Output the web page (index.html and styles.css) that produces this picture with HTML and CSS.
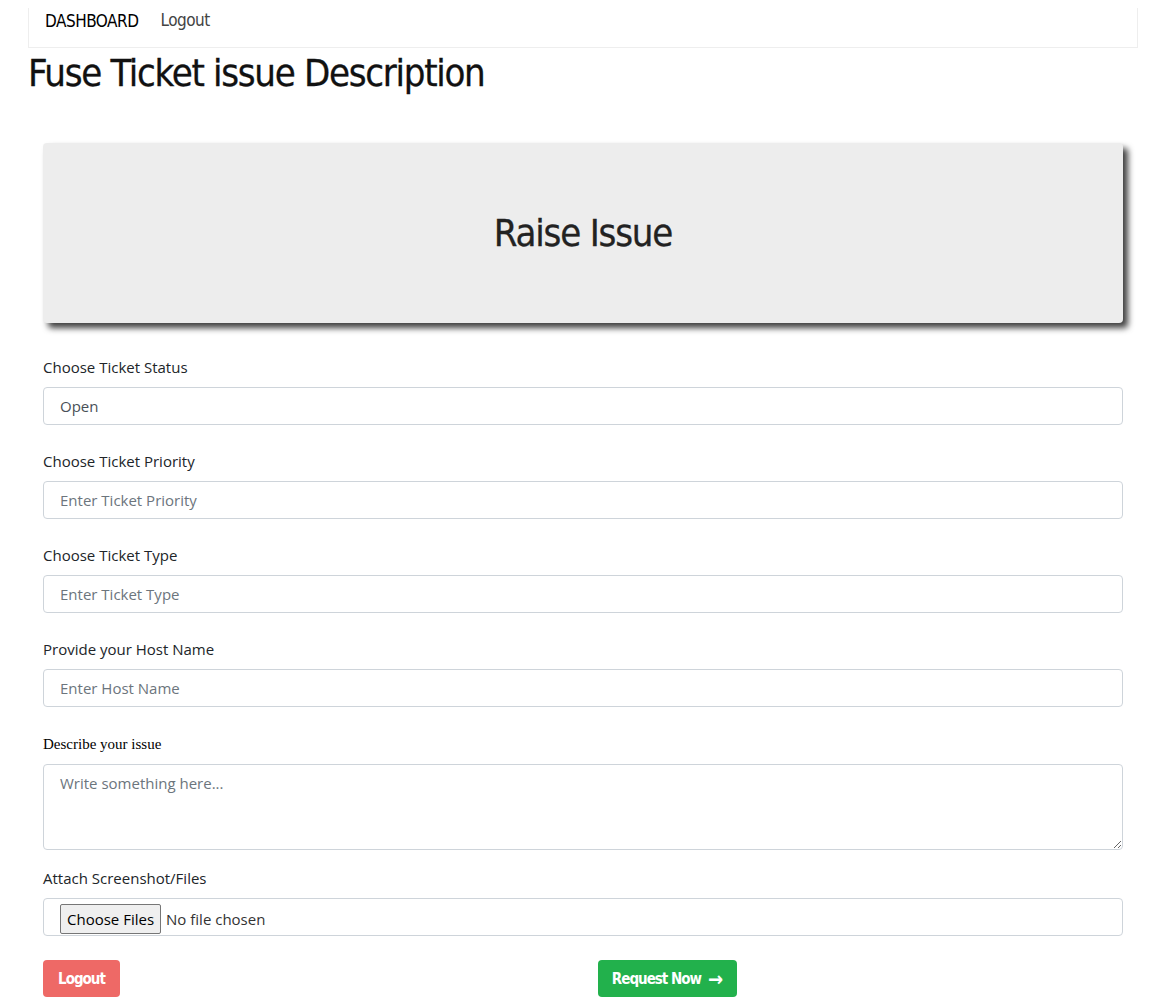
FILE: index.html
```html
<!DOCTYPE html>
<html>
<head>
<meta charset="utf-8">
<link rel="stylesheet" href="styles.css">
</head>
<body>
<div class="page">
  <nav class="navbar">
    <a class="nav-brand" href="#">DASHBOARD</a>
    <a class="nav-link" href="#">Logout</a>
  </nav>
  <h1 class="title">Fuse Ticket issue Description</h1>
  <div class="form-wrap">
    <div class="hero-card">
      <h2 class="hero-title">Raise Issue</h2>
    </div>
    <form class="ticket-form">
      <div class="group">
        <label class="lbl">Choose Ticket Status</label>
        <input class="field" type="text" value="Open">
      </div>
      <div class="group">
        <label class="lbl">Choose Ticket Priority</label>
        <input class="field" type="text" placeholder="Enter Ticket Priority">
      </div>
      <div class="group">
        <label class="lbl">Choose Ticket Type</label>
        <input class="field" type="text" placeholder="Enter Ticket Type">
      </div>
      <div class="group">
        <label class="lbl">Provide your Host Name</label>
        <input class="field" type="text" placeholder="Enter Host Name">
      </div>
      <div class="group group-area">
        <label class="lbl lbl-serif">Describe your issue</label>
        <textarea class="field area" placeholder="Write something here..."></textarea>
      </div>
      <div class="group group-file">
        <label class="lbl">Attach Screenshot/Files</label>
        <div class="field file-field">
          <span class="file-btn">Choose Files</span>
          <span class="file-text">No file chosen</span>
        </div>
      </div>
      <div class="actions">
        <button type="button" class="btn btn-red">Logout</button>
        <button type="button" class="btn btn-green">Request Now <span class="arrow">&#x2192;</span></button>
      </div>
    </form>
  </div>
</div>
</body>
</html>
```

FILE: styles.css
```css
html, body {
  margin: 0;
  padding: 0;
  background: #fff;
}
body {
  font-family: "Open Sans", "Noto Sans", sans-serif;
  color: #212529;
}
.page {
  width: 1110px;
  margin: 0 0 0 28px;
  padding-top: 8px;
}
.navbar {
  display: flex;
  align-items: center;
  height: 39px;
  border: 1px solid #eeeeee;
  border-top: none;
  padding: 0 16px;
  gap: 22px;
  font-family: "DejaVu Sans", sans-serif;
  font-stretch: condensed;
  font-size: 17px;
  letter-spacing: -0.5px;
}
.nav-brand {
  color: #000;
  text-decoration: none;
  margin-top: -14px;
}
.nav-link {
  color: #444;
  text-decoration: none;
  margin-top: -16px;
}
.title {
  font-family: "DejaVu Sans", sans-serif;
  font-stretch: condensed;
  font-weight: normal;
  font-size: 38px;
  letter-spacing: -1.3px;
  line-height: 50px;
  margin: 0;
  color: #111;
  -webkit-text-stroke: 0.3px #111;
}
.form-wrap {
  padding: 45px 15px 0 15px;
}
.hero-card {
  height: 180px;
  background: #ededed;
  border-radius: 4px;
  box-shadow: 5px 5px 6px rgba(0,0,0,0.75);
  display: flex;
  align-items: center;
  justify-content: center;
}
.hero-title {
  font-family: "DejaVu Sans", sans-serif;
  font-stretch: condensed;
  font-weight: normal;
  font-size: 38px;
  letter-spacing: -1.2px;
  margin: 0;
  color: #222;
  -webkit-text-stroke: 0.3px #222;
}
.ticket-form {
  padding-top: 34px;
}
.group {
  display: flex;
  flex-direction: column;
  margin-bottom: 26px;
}
.lbl {
  font-size: 15px;
  line-height: 20px;
  margin-bottom: 10px;
  color: #212529;
}
.lbl-serif {
  font-family: "Liberation Serif", serif;
  font-size: 15px;
  margin-top: 1px;
  color: #000;
}
.group-area {
  margin-bottom: 18px;
}
.field {
  box-sizing: border-box;
  height: 38px;
  width: 100%;
  border: 1px solid #ced4da;
  border-radius: 4px;
  padding: 0 16px;
  font-family: "Open Sans", "Noto Sans", sans-serif;
  font-size: 15px;
  color: #495057;
  background: #fff;
  margin: 0;
}
.field::placeholder {
  color: #6c757d;
}
.area {
  height: 86px;
  padding-top: 8px;
  resize: vertical;
}
.file-field {
  display: flex;
  align-items: center;
  padding-top: 4px;
}
.file-btn {
  box-sizing: border-box;
  height: 30px;
  padding: 0 6px;
  display: flex;
  align-items: center;
  border: 1px solid #767676;
  border-radius: 2px;
  background: #efefef;
  color: #000;
  font-size: 15px;
}
.file-text {
  margin-left: 5px;
  color: #333;
  font-size: 15px;
}
.group-file {
  margin-bottom: 24px;
}
.actions {
  display: flex;
}
.btn {
  height: 37px;
  border: none;
  border-radius: 4px;
  color: #fff;
  font-family: "DejaVu Sans", sans-serif;
  font-stretch: condensed;
  font-weight: bold;
  font-size: 15px;
  letter-spacing: -1px;
  padding: 0;
  white-space: nowrap;
  display: inline-flex;
  align-items: center;
  justify-content: center;
  cursor: pointer;
}
.btn-red {
  background: #ee6966;
  width: 77px;
}
.btn-green {
  background: #22b14c;
  width: 139px;
  margin-left: 478px;
}
.arrow {
  font-size: 20px;
  margin-left: 7px;
  letter-spacing: 0;
}
```
